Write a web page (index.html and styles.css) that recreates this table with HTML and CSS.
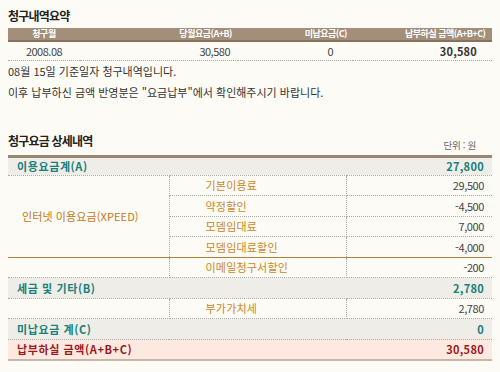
FILE: index.html
```html
<!DOCTYPE html>
<html lang="ko">
<head>
<meta charset="utf-8">
<title>청구내역요약</title>
<link rel="stylesheet" href="styles.css">
</head>
<body>
<h2 class="title">청구내역요약</h2>
<table class="summary">
  <colgroup><col class="c1"><col class="c2"><col class="c3"><col class="c4"></colgroup>
  <thead>
    <tr>
      <th class="center">청구월</th>
      <th class="right">당월요금(A+B)</th>
      <th class="right">미납요금(C)</th>
      <th class="right last">납부하실 금액(A+B+C)</th>
    </tr>
  </thead>
  <tbody>
    <tr>
      <td class="center">2008.08</td>
      <td class="right p2">30,580</td>
      <td class="right p3">0</td>
      <td class="right p4 strong">30,580</td>
    </tr>
  </tbody>
</table>
<div class="notes">
  <p>08월 15일 기준일자 청구내역입니다.</p>
  <p>이후 납부하신 금액 반영분은 "요금납부"에서 확인해주시기 바랍니다.</p>
</div>

<div class="section-head">
  <h2 class="title">청구요금 상세내역</h2>
  <span class="unit">단위 : 원</span>
</div>
<table class="detail">
  <colgroup><col class="d1"><col class="d2"><col class="d3"></colgroup>
  <tbody>
    <tr class="sum teal">
      <td colspan="2" class="label">이용요금계(A)</td>
      <td class="val">27,800</td>
    </tr>
    <tr>
      <td rowspan="4" class="group">인터넷 이용요금(XPEED)</td>
      <td class="item">기본이용료</td>
      <td class="num">29,500</td>
    </tr>
    <tr>
      <td class="item">약정할인</td>
      <td class="num">-4,500</td>
    </tr>
    <tr>
      <td class="item">모뎀임대료</td>
      <td class="num">7,000</td>
    </tr>
    <tr class="groupend">
      <td class="item">모뎀임대료할인</td>
      <td class="num">-4,000</td>
    </tr>
    <tr>
      <td class="empty"></td>
      <td class="item">이메일청구서할인</td>
      <td class="num">-200</td>
    </tr>
    <tr class="sum teal">
      <td colspan="2" class="label">세금 및 기타(B)</td>
      <td class="val">2,780</td>
    </tr>
    <tr>
      <td class="empty"></td>
      <td class="item">부가가치세</td>
      <td class="num">2,780</td>
    </tr>
    <tr class="sum teal">
      <td colspan="2" class="label">미납요금 계(C)</td>
      <td class="val">0</td>
    </tr>
    <tr class="total">
      <td colspan="2" class="label">납부하실 금액(A+B+C)</td>
      <td class="val">30,580</td>
    </tr>
  </tbody>
</table>
</body>
</html>
```

FILE: styles.css
```css
html, body {
  background: #fcfbf5;
}
body {
  margin: 8px;
  font-family: "Noto Sans CJK KR", "Noto Sans", sans-serif;
  color: #333;
  font-size: 11px;
}
.title {
  margin: 0;
  font-size: 12px;
  line-height: 16px;
  font-weight: bold;
  letter-spacing: -0.8px;
  color: #222;
}
.summary {
  width: 484px;
  margin-top: 4px;
  border-collapse: collapse;
  table-layout: fixed;
}
.summary .c1 { width: 72px; }
.summary .c2 { width: 158px; }
.summary .c3 { width: 115px; }
.summary .c4 { width: 139px; }
.summary th {
  background: #a28e79;
  color: #fff;
  font-size: 9px;
  letter-spacing: -0.5px;
  font-weight: bold;
  height: 12px;
  line-height: 12px;
  padding: 0 6px 0 0;
  border-bottom: 2px solid #86725f;
}
.summary th.center { padding: 0; }
.summary th.last { border-right: 1px solid #86725f; }
.summary td {
  height: 18px;
  line-height: 18px;
  padding: 0;
  font-size: 11px;
  letter-spacing: -0.5px;
  color: #444;
  border-bottom: 1px dotted #aaa;
}
.center { text-align: center; }
.right { text-align: right; }
.summary td.p2 { padding-right: 8px; }
.summary td.p3 { padding-right: 20px; }
.summary td.p4 { padding-right: 15px; }
.summary td.strong { font-weight: bold; color: #333; letter-spacing: 0.2px; }

.notes p {
  margin: 0;
  line-height: 21px;
  letter-spacing: 0;
  color: #333;
}
.section-head {
  display: flex;
  justify-content: space-between;
  align-items: flex-end;
  margin-top: 30px;
  margin-bottom: 6px;
}
.unit {
  font-size: 9.5px;
  color: #666;
  line-height: 12px;
  padding-right: 16px;
  margin-bottom: -2px;
  letter-spacing: -0.3px;
}
.detail {
  width: 484px;
  border-collapse: collapse;
  table-layout: fixed;
  border-top: 3px solid #9a8672;
  border-bottom: 2px solid #c6b6a6;
}
.detail .d1 { width: 161px; }
.detail .d2 { width: 177px; }
.detail .d3 { width: 146px; }
.detail td {
  height: 19.5px;
  padding: 0;
  border-bottom: 1px dotted #aaa;
  vertical-align: middle;
  line-height: 14px;
}
.detail tr.sum:first-child td { height: 16.5px; }
.detail .sum td { background: #eeede7; }
.detail .label {
  padding-left: 9px;
  font-weight: bold;
  letter-spacing: 0.6px;
}
.detail .val {
  text-align: right;
  padding-right: 8px;
  font-weight: bold;
  letter-spacing: 0.3px;
}
.detail .teal td { color: #17807a; }
.detail .total td {
  background: #fde9df;
  color: #9c1a1e;
}
.detail .group {
  color: #c07a18;
  padding-left: 14px;
  border-right: 1px dotted #aaa;
  border-bottom: 1px solid #b08040;
  letter-spacing: 0.1px;
}
.detail .empty { border-right: 1px dotted #aaa; }
.detail .item {
  color: #cc8728;
  padding-left: 36px;
  border-right: 1px dotted #aaa;
  letter-spacing: 0.2px;
}
.detail .num {
  text-align: right;
  padding-right: 8px;
  color: #444;
  letter-spacing: -0.4px;
}
.detail .groupend td { border-bottom: 1px solid #b08040; }
```
